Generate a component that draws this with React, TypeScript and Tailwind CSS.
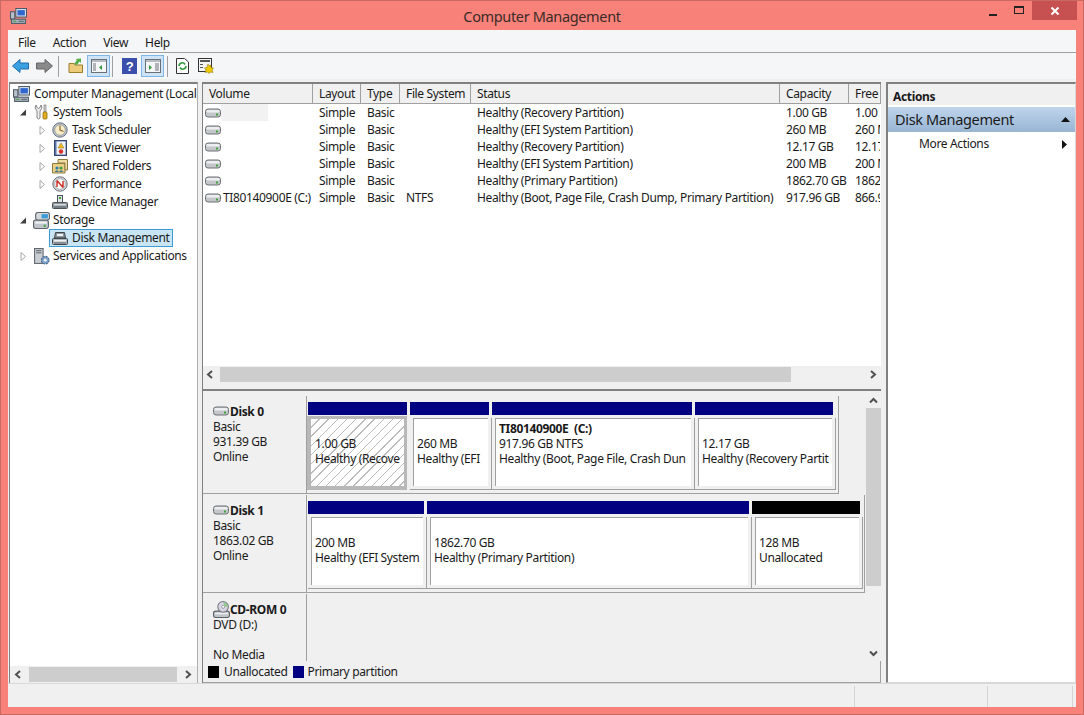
import type { ReactNode } from "react";

function Ico({ s = 16, children, className = "" }: { s?: number; children: ReactNode; className?: string }) {
  return (
    <svg width={s} height={s} viewBox="0 0 16 16" className={`shrink-0 ${className}`}>
      {children}
    </svg>
  );
}

const DriveIcon = () => (
  <svg width="16" height="10" viewBox="0 0 16 10" className="shrink-0">
    <rect x="0.500" y="1" width="15" height="8" rx="2.500" fill="#c4c7c9" stroke="#6c7073" />
    <rect x="1.500" y="2" width="13" height="2.500" rx="1" fill="#eceeef" />
    <rect x="11" y="5.500" width="2" height="2" fill="#3fa33a" />
  </svg>
);

const ComputerIcon = () => (
  <Ico s={17}>
    <rect x="5.500" y="0.500" width="10" height="8" fill="#dfe6ee" stroke="#4d5a68" />
    <rect x="7" y="2" width="7" height="5" fill="#2f66d0" />
    <rect x="0.500" y="3.500" width="4" height="7" fill="#b9c2ca" stroke="#4d5a68" />
    <rect x="1.500" y="10.500" width="13" height="4" fill="#aab3bb" stroke="#4d5a68" />
    <rect x="3" y="12" width="3" height="1" fill="#3fa33a" />
    <rect x="8" y="12" width="5" height="1" fill="#5b6670" />
  </Ico>
);

const ToolsIcon = () => (
  <Ico>
    <path d="M3 1 L2 4 L4 7 L4 14 Q5.500 16 7 14 L7 7 L9 4 L8 1 L7 3.500 L5.500 4.500 L4 3.500 Z" fill="#eeeeee" stroke="#6a6a6a" strokeWidth="0.8" />
    <rect x="11" y="1" width="2" height="7" fill="#d8d8d8" stroke="#6a6a6a" strokeWidth="0.6" />
    <rect x="10" y="8" width="4" height="7" rx="1" fill="#e6ae1f" stroke="#8a6a10" strokeWidth="0.8" />
  </Ico>
);

const ClockIcon = () => (
  <Ico>
    <circle cx="8" cy="8" r="7.200" fill="#bcc6d0" stroke="#68727c" />
    <circle cx="8" cy="8" r="5.300" fill="#f8eccb" stroke="#8d8f8a" strokeWidth="0.7" />
    <path d="M8 3.500 V8 L11.500 9.500" fill="none" stroke="#8d6a2a" strokeWidth="1.2" />
  </Ico>
);

const EventIcon = () => (
  <Ico>
    <rect x="2.500" y="0.500" width="12" height="15" fill="#5b76ad" stroke="#34466e" />
    <rect x="4.500" y="1.500" width="9" height="13" fill="#eef1f6" />
    <path d="M9 3 L12 8 H6 Z" fill="#f0c020" stroke="#8a6a10" strokeWidth="0.5" />
    <circle cx="9" cy="11.500" r="2.200" fill="#d8342c" />
  </Ico>
);

const SharedIcon = () => (
  <Ico>
    <path d="M0.500 5.500 H13 V15 H0.500 Z" fill="#e8cf86" stroke="#8f7a3e" />
    <path d="M6 1.500 H15.500 V12 H13 V5 H6 Z" fill="#efdca0" stroke="#8f7a3e" />
    <circle cx="5" cy="10" r="1.600" fill="#2c7fb8" />
    <circle cx="9" cy="10" r="1.600" fill="#3d9a45" />
    <path d="M2.500 14 Q5 10.500 7 14 Q9 10.500 11.500 14 Z" fill="#3c7a9a" />
  </Ico>
);

const PerfIcon = () => (
  <Ico>
    <circle cx="8" cy="8" r="7.200" fill="#d6d8da" stroke="#6b7278" />
    <circle cx="8" cy="8" r="5.300" fill="#fbfbfb" stroke="#9a9ea2" strokeWidth="0.7" />
    <path d="M5 4.500 L11 11.500 M5 4.500 V11 M11 5 V11.500" fill="none" stroke="#c92a22" strokeWidth="1.4" />
  </Ico>
);

const DeviceIcon = ({ selected = false }: { selected?: boolean }) => (
  <Ico>
    {selected ? (
      <>
        <path d="M2.500 8 L3.500 2.500 H12.500 L13.500 8 Z" fill="#8b949b" stroke="#3f464c" />
        <rect x="5" y="4" width="6" height="2" fill="#f4f4f4" />
        <rect x="0.500" y="8.500" width="15" height="6" rx="1" fill="#aeb6bc" stroke="#3f464c" />
        <rect x="2" y="10" width="12" height="1.500" fill="#eef0f1" />
        <rect x="2" y="12.500" width="12" height="1" fill="#5e666c" />
      </>
    ) : (
      <>
        <rect x="0.500" y="8.500" width="15" height="6" rx="1" fill="#8d979f" stroke="#4b5258" />
        <rect x="2" y="10" width="12" height="1.500" fill="#d3d8dc" />
        <rect x="2" y="12.500" width="12" height="1" fill="#5e666c" />
        <rect x="5.500" y="1.500" width="5" height="7" fill="#dfe3e6" stroke="#4b5258" />
        <rect x="7" y="3" width="2" height="2" fill="#3fa33a" />
      </>
    )}
  </Ico>
);

const StorageIcon = () => (
  <Ico s={17}>
    <rect x="0.500" y="7.500" width="14" height="8" rx="2" fill="#bfc5ca" stroke="#5b6268" />
    <rect x="2" y="9" width="11" height="2" fill="#eef0f1" />
    <rect x="10" y="12" width="2" height="2" fill="#3fa33a" />
    <rect x="2.500" y="0.500" width="13" height="7" rx="2" fill="#d4d8db" stroke="#5b6268" />
    <rect x="8" y="2" width="6" height="4" fill="#3e9bd8" />
  </Ico>
);

const ServicesIcon = () => (
  <Ico s={17}>
    <rect x="1.500" y="0.500" width="8" height="14" fill="#c8ced3" stroke="#5f666c" />
    <rect x="3" y="2" width="5" height="1" fill="#5f666c" />
    <rect x="3" y="4" width="5" height="1" fill="#5f666c" />
    <circle cx="11.500" cy="11.500" r="3.600" fill="#7fa2c8" stroke="#42648a" strokeDasharray="2 0.800" />
    <circle cx="11.500" cy="11.500" r="1.300" fill="#eef3f8" />
  </Ico>
);

const CdIcon = () => (
  <Ico s={17}>
    <rect x="0.500" y="9.500" width="15" height="6" rx="2" fill="#bfc5ca" stroke="#5b6268" />
    <rect x="2" y="11" width="12" height="1.500" fill="#eef0f1" />
    <circle cx="9.500" cy="5.500" r="5" fill="#d8d4e4" stroke="#777a80" />
    <circle cx="9.500" cy="5.500" r="1.400" fill="#fff" stroke="#777a80" strokeWidth="0.6" />
    <path d="M9.500 1 A4.500 4.500 0 0 1 14 5.500 H11 Z" fill="#93c98f" />
  </Ico>
);

const Expander = ({ open = false, none = false }: { open?: boolean; none?: boolean }) => (
  <svg width="8" height="9" viewBox="0 0 8 9" className="shrink-0">
    {none ? null : open ? (
      <path d="M1 7.500 H7 V1.500 Z" fill="#404040" />
    ) : (
      <path d="M2 0.500 L6.500 4.500 L2 8.500 Z" fill="#fff" stroke="#a6a6a6" />
    )}
  </svg>
);

function TreeRow({ pad, label, icon, open, none, selected }: { pad: string; label: string; icon: ReactNode; open?: boolean; none?: boolean; selected?: boolean }) {
  return (
    <div className={`flex h-[18px] items-center whitespace-nowrap ${pad}`}>
      <Expander open={open} none={none} />
      <div className={`ml-[3px] flex h-[18px] items-center border pl-[2px] pr-[2px] ${selected ? "border-[#3c9dd6] bg-[#c9e5f4]" : "border-transparent"}`}>
        <div className="flex w-[20px] shrink-0 items-center">{icon}</div>
        <span>{label}</span>
      </div>
    </div>
  );
}

const ToolSep = ({ m }: { m: string }) => <div className={`h-[21px] w-px shrink-0 bg-[#a0a0a0] ${m}`} />;

function ToolBtn({ on, children }: { on?: boolean; children: ReactNode }) {
  return (
    <div className={`flex h-[22px] w-[23px] shrink-0 items-center justify-center ${on ? "border border-[#7fb6e6] bg-[#cfe3f6]" : ""}`}>
      {children}
    </div>
  );
}

const PaneIcon = ({ right }: { right?: boolean }) => (
  <Ico>
    <rect x="0.500" y="1.500" width="15" height="13" fill="#f4f6f8" stroke="#6a7076" />
    <rect x="1" y="2" width="14" height="2" fill="#b6bcc2" />
    {right ? (
      <>
        <path d="M4 7 L7 9.500 L4 12 Z" fill="#2f9a3c" />
        <path d="M10 6 H14 M10 8 H14 M10 10 H14 M10 12 H14" stroke="#6a7076" />
      </>
    ) : (
      <>
        <path d="M2 6 H5 M2 8 H5 M2 10 H5 M2 12 H5" stroke="#6a7076" />
        <path d="M11 7 L8 9.500 L11 12 Z" fill="#2f9a3c" />
      </>
    )}
  </Ico>
);

const columns = [
  { name: "Volume", w: "w-[110px]" },
  { name: "Layout", w: "w-[48px]" },
  { name: "Type", w: "w-[39px]" },
  { name: "File System", w: "w-[71px]" },
  { name: "Status", w: "w-[309px]" },
  { name: "Capacity", w: "w-[69px]" },
  { name: "Free", w: "w-[32px]" },
];

const volumes = [
  { name: "", fs: "", status: "Healthy (Recovery Partition)", cap: "1.00 GB", free: "1.00 GB", blank: true },
  { name: "", fs: "", status: "Healthy (EFI System Partition)", cap: "260 MB", free: "260 MB" },
  { name: "", fs: "", status: "Healthy (Recovery Partition)", cap: "12.17 GB", free: "12.17 GB" },
  { name: "", fs: "", status: "Healthy (EFI System Partition)", cap: "200 MB", free: "200 MB" },
  { name: "", fs: "", status: "Healthy (Primary Partition)", cap: "1862.70 GB", free: "1862.70" },
  { name: "TI80140900E (C:)", fs: "NTFS", status: "Healthy (Boot, Page File, Crash Dump, Primary Partition)", cap: "917.96 GB", free: "866.97 GB" },
];

function Partition({ w, bar = "bg-[#000080]", lines, bold, hatched }: { w: string; bar?: string; lines: string[]; bold?: string; hatched?: boolean }) {
  const text = (
    <>
      <div className="h-[15px] whitespace-pre font-bold">{bold}</div>
      {lines.map((l) => (
        <div key={l} className="h-[15px]">{l}</div>
      ))}
    </>
  );
  return (
    <div className={`flex shrink-0 flex-col ${w}`}>
      <div className={`mr-[3px] h-[13px] shrink-0 ${bar}`} />
      {hatched ? (
        <div className="mt-px ml-[-1px] mr-[3px] min-h-0 flex-1 overflow-hidden border-t-[3px] border-r-[3px] border-b-4 border-l-4 border-[#b8b8b8]">
          <div className="h-full overflow-hidden whitespace-nowrap bg-[repeating-linear-gradient(135deg,#ffffff_0,#ffffff_5.500px,#bcbcbc_5.500px,#bcbcbc_6.500px)] pt-[2px] pl-[4px] leading-[15px]">
            {text}
          </div>
        </div>
      ) : (
        <div className="mt-[3px] min-h-0 flex-1 overflow-hidden border-r border-b border-[#a0a0a0] pl-[3px] pr-[3px] pb-[3px]">
          <div className="h-full overflow-hidden whitespace-nowrap border-t border-l border-[#a0a0a0] bg-white pt-[2px] pl-[3px] leading-[15px]">
            {text}
          </div>
        </div>
      )}
    </div>
  );
}

function DiskLabel({ icon, name, lines, last }: { icon: ReactNode; name: string; lines: string[]; last?: boolean }) {
  return (
    <div className={`w-[104px] shrink-0 border-r border-[#a0a0a0] pl-[10px] leading-[15px] ${last ? "" : "border-b"}`}>
      <div className="mt-[7px] flex h-[16px] items-center">
        <div className="flex w-[17px] shrink-0 items-center">{icon}</div>
        <span className="font-bold">{name}</span>
      </div>
      {lines.map((l, i) => (
        <div key={i} className="h-[15px] whitespace-nowrap">{l}</div>
      ))}
    </div>
  );
}

const ArrowH = ({ right }: { right?: boolean }) => (
  <svg width="7" height="9" viewBox="0 0 7 9" className="shrink-0">
    <path d={right ? "M1 1 L5 4.500 L1 8" : "M6 1 L2 4.500 L6 8"} fill="none" stroke="#505050" strokeWidth="2" />
  </svg>
);

const ArrowV = ({ down }: { down?: boolean }) => (
  <svg width="9" height="7" viewBox="0 0 9 7" className="shrink-0">
    <path d={down ? "M1 1.500 L4.500 5 L8 1.500" : "M1 5.500 L4.500 2 L8 5.500"} fill="none" stroke="#505050" strokeWidth="2" />
  </svg>
);

export default function App() {
  return (
    <div className="flex h-[715px] w-[1084px] flex-col overflow-hidden border border-[#c96a62] bg-[#f8827a] text-[12px] tracking-[-0.35px] text-[#1a1a1a] [font-family:'Noto_Sans',sans-serif]">
      {/* Title bar */}
      <div className="grid h-[29px] shrink-0 grid-cols-[1fr_auto_1fr]">
        <div className="pl-[9px] pt-[7px]">
          <ComputerIcon />
        </div>
        <div className="pt-[5px] text-[14.500px] leading-[20px] tracking-[-0.35px] text-[#3a2a28]">Computer Management</div>
        <div className="flex justify-end pr-[6px]">
          <div className="flex h-[20px] w-[26px] items-end justify-center pb-[5px]">
            <div className="h-[2px] w-[8px] bg-[#222]" />
          </div>
          <div className="flex h-[20px] w-[26px] items-center justify-center pb-[2px]">
            <div className="h-[8px] w-[10px] border border-t-2 border-[#222]" />
          </div>
          <div className="flex h-[19px] w-[45px] items-center justify-center bg-[#c75050]">
            <svg width="10" height="10" viewBox="0 0 10 10">
              <path d="M1.500 1.500 L8.500 8.500 M8.500 1.500 L1.500 8.500" stroke="#fff" strokeWidth="2" />
            </svg>
          </div>
        </div>
      </div>

      {/* Client area */}
      <div className="mx-[7px] mb-[7px] flex min-h-0 flex-1 flex-col bg-[#f0f0f0]">
        {/* Menu */}
        <div className="flex h-[23px] shrink-0 items-center gap-[17px] border-b border-[#a0a0a0] bg-[#f5f6f7] pl-[10px] pt-[3px]">
          <span>File</span>
          <span>Action</span>
          <span>View</span>
          <span>Help</span>
        </div>
        {/* Toolbar */}
        <div className="flex h-[26px] shrink-0 items-center bg-[#f5f6f7] pl-[2px]">
          <div className="flex w-[20px] justify-center">
            <svg width="17" height="14" viewBox="0 0 17 14"><path d="M8 0.500 L0.500 7 L8 13.500 V10 H16.500 V4 H8 Z" fill="#3aa0e0" stroke="#1f6fb0" /></svg>
          </div>
          <div className="ml-[4px] flex w-[20px] justify-center">
            <svg width="17" height="14" viewBox="0 0 17 14"><path d="M9 0.500 L16.500 7 L9 13.500 V10 H0.500 V4 H9 Z" fill="#8a8a8a" stroke="#666" /></svg>
          </div>
          <ToolSep m="ml-[4px] mr-[5px]" />
          <ToolBtn>
            <Ico>
              <path d="M1 5.500 H6 L7 7 H14.500 V14.500 H1 Z" fill="#eccb7a" stroke="#9a7d2e" />
              <path d="M6 6 L9 2 L7.500 1 L13 0.500 L13 5 L11.500 3.500 L9 7 Z" fill="#55b04a" />
            </Ico>
          </ToolBtn>
          <ToolBtn on>
            <PaneIcon />
          </ToolBtn>
          <ToolSep m="ml-[2px] mr-[5px]" />
          <ToolBtn>
            <svg width="15" height="16" viewBox="0 0 15 16">
              <rect width="15" height="16" fill="#3b50ad" />
              <text x="7.500" y="13" textAnchor="middle" fontSize="13" fontWeight="700" fill="#fff" fontFamily="Liberation Sans">?</text>
            </svg>
          </ToolBtn>
          <ToolBtn on>
            <PaneIcon right />
          </ToolBtn>
          <ToolSep m="ml-[3px] mr-[3px]" />
          <ToolBtn>
            <Ico>
              <path d="M1.500 0.500 H9.500 L13.500 4 V15.500 H1.500 Z" fill="#fff" stroke="#333" />
              <path d="M4 8 A3.200 3.200 0 0 1 10 6.500 M11 8 A3.200 3.200 0 0 1 5 9.500" fill="none" stroke="#2c9a3a" strokeWidth="1.6" />
            </Ico>
          </ToolBtn>
          <ToolBtn>
            <Ico>
              <rect x="0.500" y="0.500" width="13" height="13" fill="#f4f4f4" stroke="#333" />
              <rect x="2" y="2" width="10" height="2" fill="#555" />
              <rect x="2" y="6" width="3" height="1" fill="#555" />
              <rect x="2" y="9" width="3" height="1" fill="#555" />
              <path d="M10 6 L11 8 L13 7 L13 9.500 L15.500 10 L14 12 L15 14.500 L12.500 14 L11 15.500 L9.500 14 L7 14.500 L8 12 L6.500 10 L9 9.500 Z" fill="#f0c800" stroke="#7d6a00" strokeWidth="0.5" />
            </Ico>
          </ToolBtn>
        </div>

        {/* Panes */}
        <div className="mt-[3px] flex min-h-0 flex-1 items-stretch pl-px">
          {/* Tree */}
          <div className="flex w-[189px] shrink-0 flex-col border-t-2 border-r border-l border-r-[#b0b0b0] border-t-[#808080] border-l-[#808080] bg-white">
            <div className="min-h-0 flex-1 overflow-hidden pt-px">
              <div className="flex h-[18px] items-center whitespace-nowrap pl-[3px]">
                <div className="w-[21px] shrink-0"><ComputerIcon /></div>
                <span>Computer Management (Local)</span>
              </div>
              <TreeRow pad="pl-[9px]" label="System Tools" icon={<ToolsIcon />} open />
              <TreeRow pad="pl-[28px]" label="Task Scheduler" icon={<ClockIcon />} />
              <TreeRow pad="pl-[28px]" label="Event Viewer" icon={<EventIcon />} />
              <TreeRow pad="pl-[28px]" label="Shared Folders" icon={<SharedIcon />} />
              <TreeRow pad="pl-[28px]" label="Performance" icon={<PerfIcon />} />
              <TreeRow pad="pl-[28px]" label="Device Manager" icon={<DeviceIcon />} none />
              <TreeRow pad="pl-[9px]" label="Storage" icon={<StorageIcon />} open />
              <TreeRow pad="pl-[28px]" label="Disk Management" icon={<DeviceIcon selected />} none selected />
              <TreeRow pad="pl-[9px]" label="Services and Applications" icon={<ServicesIcon />} />
            </div>
            <div className="flex h-[17px] shrink-0 items-center bg-[#f0f0f0] pl-[4px] pr-[5px]">
              <ArrowH />
              <div className="mx-[8px] h-[15px] flex-1 bg-[#cdcdcd]" />
              <ArrowH right />
            </div>
          </div>

          {/* Centre */}
          <div className="ml-[4px] flex w-[679px] shrink-0 flex-col border-t-2 border-l border-[#808080]">
            {/* Volume list */}
            <div className="flex h-[299px] shrink-0 flex-col overflow-hidden bg-white">
              <div className="flex h-[20px] shrink-0 border-b border-[#a0a0a0] bg-[#f0f0f0]">
                {columns.map((c) => (
                  <div key={c.name} className={`${c.w} shrink-0 overflow-hidden whitespace-nowrap border-r border-[#a0a0a0] pl-[6px] leading-[20px]`}>
                    {c.name}
                  </div>
                ))}
              </div>
              <div className="min-h-0 flex-1">
                {volumes.map((v, i) => (
                  <div key={i} className="flex h-[17px] items-center whitespace-nowrap">
                    <div className="flex w-[110px] shrink-0 items-center pl-[2px]">
                      <DriveIcon />
                      {v.blank ? <div className="h-[17px] w-[47px] bg-[#f2f2f2]" /> : <span className="ml-[2px]">{v.name}</span>}
                    </div>
                    <div className="w-[48px] shrink-0 pl-[6px]">Simple</div>
                    <div className="w-[39px] shrink-0 pl-[6px]">Basic</div>
                    <div className="w-[71px] shrink-0 pl-[6px]">{v.fs}</div>
                    <div className="w-[309px] shrink-0 overflow-hidden pl-[6px]">{v.status}</div>
                    <div className="w-[69px] shrink-0 pl-[6px]">{v.cap}</div>
                    <div className="w-[31px] shrink-0 overflow-hidden pl-[6px]">{v.free}</div>
                  </div>
                ))}
              </div>
              <div className="flex h-[17px] shrink-0 items-center bg-[#f0f0f0] pl-[3px] pr-[4px]">
                <ArrowH />
                <div className="ml-[7px] flex h-[15px] flex-1 pr-[9px]">
                  <div className="w-[571px] bg-[#cdcdcd]" />
                </div>
                <ArrowH right />
              </div>
            </div>
            {/* Splitter */}
            <div className="h-[8px] shrink-0 border-b-2 border-b-[#808080] bg-[#f0f0f0]" />
            {/* Disks */}
            <div className="flex min-h-0 flex-1 flex-col bg-[#f0f0f0]">
              <div className="flex min-h-0 flex-1">
                <div className="flex min-w-0 flex-1 flex-col pt-[5px]">
                  <div className="flex h-[98px] shrink-0">
                    <DiskLabel icon={<DriveIcon />} name="Disk 0" lines={["Basic", "931.39 GB", "Online"]} />
                    <div className="flex border-r border-b border-[#a0a0a0] pt-[6px] pr-[2px] pb-[3px] pl-px">
                      <Partition w="w-[102px]" lines={["1.00 GB", "Healthy (Recove"]} hatched />
                      <Partition w="w-[82px]" lines={["260 MB", "Healthy (EFI"]} />
                      <Partition w="w-[203px]" bold="TI80140900E  (C:)" lines={["917.96 GB NTFS", "Healthy (Boot, Page File, Crash Dun"]} />
                      <Partition w="w-[141px]" lines={["12.17 GB", "Healthy (Recovery Partit"]} />
                    </div>
                  </div>
                  <div className="mt-px flex h-[98px] shrink-0">
                    <DiskLabel icon={<DriveIcon />} name="Disk 1" lines={["Basic", "1863.02 GB", "Online"]} />
                    <div className="flex border-r border-b border-[#a0a0a0] pt-[6px] pr-px pb-[3px] pl-px">
                      <Partition w="w-[119px]" lines={["200 MB", "Healthy (EFI System"]} />
                      <Partition w="w-[325px]" lines={["1862.70 GB", "Healthy (Primary Partition)"]} />
                      <Partition w="w-[111px]" bar="bg-black" lines={["128 MB", "Unallocated"]} />
                    </div>
                  </div>
                  <div className="mt-px flex min-h-0 flex-1 overflow-hidden">
                    <DiskLabel icon={<CdIcon />} name="CD-ROM 0" lines={["DVD (D:)", "", "No Media"]} last />
                  </div>
                </div>
                {/* Vertical scrollbar */}
                <div className="flex w-[16px] shrink-0 flex-col items-center pb-[4px] pt-[6px]">
                  <ArrowV />
                  <div className="mt-[4px] h-[178px] w-[15px] bg-[#cdcdcd]" />
                  <div className="flex-1" />
                  <ArrowV down />
                </div>
              </div>
              {/* Legend */}
              <div className="flex h-[22px] shrink-0 items-center border-r border-b border-[#a0a0a0] pl-[5px] pt-px">
                <div className="h-[12px] w-[11px] bg-black" />
                <span className="ml-[5px]">Unallocated</span>
                <div className="ml-[5px] h-[12px] w-[11px] bg-[#000080]" />
                <span className="ml-[4px]">Primary partition</span>
              </div>
            </div>
          </div>

          {/* Actions */}
          <div className="ml-[5px] flex min-w-0 flex-1 flex-col border-t-2 border-r border-b border-l-2 border-r-[#d8d8d8] border-b-[#d8d8d8] border-t-[#808080] border-l-[#808080] bg-white">
            <div className="flex h-[23px] shrink-0 items-center border-b-2 border-[#fff] bg-[#f0f0f0] pl-[5px] pt-[4px] font-bold">Actions</div>
            <div className="flex h-[25px] shrink-0 items-center justify-between bg-gradient-to-b from-[#bfd5ec] to-[#98b5d4] pl-[7px] pr-[5px] text-[14.500px] tracking-[-0.35px]">
              <span>Disk Management</span>
              <svg width="9" height="5" viewBox="0 0 9 5"><path d="M0 5 L4.500 0 L9 5 Z" fill="#111" /></svg>
            </div>
            <div className="flex h-[24px] items-center justify-between pl-[31px] pr-[8px]">
              <span>More Actions</span>
              <svg width="5" height="9" viewBox="0 0 5 9"><path d="M0 0 L5 4.500 L0 9 Z" fill="#111" /></svg>
            </div>
          </div>
        </div>

        {/* Status bar */}
        <div className="flex h-[24px] shrink-0 border-t border-[#d8d8d8] pt-[2px]">
          <div className="w-[847px] border-r border-[#d4d4d4]" />
          <div className="w-[133px] border-r border-[#d4d4d4]" />
          <div className="w-[85px] border-r border-[#d4d4d4]" />
        </div>
      </div>
    </div>
  );
}
